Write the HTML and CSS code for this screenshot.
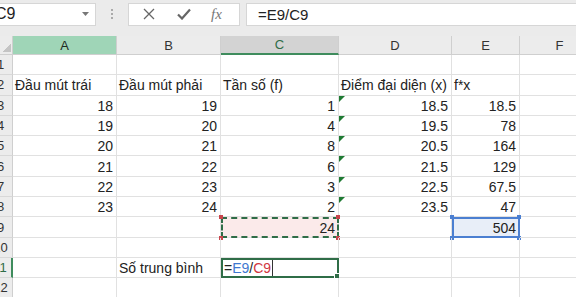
FILE: index.html
```html
<!DOCTYPE html>
<html lang="vi">
<head>
    <meta charset="UTF-8">
    <title>Bảng tính</title>
    <link rel="stylesheet" href="styles.css">
</head>
<body>
    <div class="toolbar">
        <div class="name-box">
            <span class="name">C9</span>
            <svg class="caret" width="7" height="4" viewBox="0 0 7 4"><path d="M0 0h7L3.5 4z" fill="#777"/></svg>
        </div>
        <div class="grip"><i></i><i></i><i></i></div>
        <div class="fbuttons">
            <svg width="12" height="12" viewBox="0 0 12 12"><path d="M1 1l10 10M11 1L1 11" stroke="#666" stroke-width="1.3" fill="none"/></svg>
            <svg width="14" height="12" viewBox="0 0 14 12"><path d="M1 6.5l4 4L13 1.5" stroke="#666" stroke-width="2.2" fill="none"/></svg>
            <span class="fx">fx</span>
        </div>
        <div class="formula">=E9/C9</div>
    </div>

    <div class="sheet">
        <div class="row head">
            <div class="corner"></div>
            <div class="col sel-col">A</div>
            <div class="col">B</div>
            <div class="col act-col">C</div>
            <div class="col">D</div>
            <div class="col">E</div>
            <div class="col">F</div>
        </div>
        <div class="row">
            <div class="rh">1</div><div class="c"></div><div class="c"></div><div class="c"></div><div class="c"></div><div class="c"></div><div class="c"></div>
        </div>
        <div class="row">
            <div class="rh">2</div><div class="c">Đầu mút trái</div><div class="c">Đầu mút phải</div><div class="c">Tần số (f)</div><div class="c">Điểm đại diện (x)</div><div class="c">f*x</div><div class="c"></div>
        </div>
        <div class="row">
            <div class="rh">3</div><div class="c n">18</div><div class="c n">19</div><div class="c n">1</div><div class="c n flag">18.5</div><div class="c n">18.5</div><div class="c"></div>
        </div>
        <div class="row">
            <div class="rh">4</div><div class="c n">19</div><div class="c n">20</div><div class="c n">4</div><div class="c n flag">19.5</div><div class="c n">78</div><div class="c"></div>
        </div>
        <div class="row">
            <div class="rh">5</div><div class="c n">20</div><div class="c n">21</div><div class="c n">8</div><div class="c n flag">20.5</div><div class="c n">164</div><div class="c"></div>
        </div>
        <div class="row">
            <div class="rh">6</div><div class="c n">21</div><div class="c n">22</div><div class="c n">6</div><div class="c n flag">21.5</div><div class="c n">129</div><div class="c"></div>
        </div>
        <div class="row">
            <div class="rh">7</div><div class="c n">22</div><div class="c n">23</div><div class="c n">3</div><div class="c n flag">22.5</div><div class="c n">67.5</div><div class="c"></div>
        </div>
        <div class="row">
            <div class="rh">8</div><div class="c n">23</div><div class="c n">24</div><div class="c n">2</div><div class="c n flag">23.5</div><div class="c n">47</div><div class="c"></div>
        </div>
        <div class="row">
            <div class="rh">9</div><div class="c"></div><div class="c"></div><div class="c n copy">24</div><div class="c"></div><div class="c n ref">504</div><div class="c"></div>
        </div>
        <div class="row">
            <div class="rh">10</div><div class="c"></div><div class="c"></div><div class="c"></div><div class="c"></div><div class="c"></div><div class="c"></div>
        </div>
        <div class="row">
            <div class="rh act-row">11</div><div class="c"></div><div class="c">Số trung bình</div><div class="c edit">=<span class="r1">E9</span>/<span class="r2">C9</span><span class="cursor"></span></div><div class="c"></div><div class="c"></div><div class="c"></div>
        </div>
        <div class="row">
            <div class="rh">12</div><div class="c"></div><div class="c"></div><div class="c"></div><div class="c"></div><div class="c"></div><div class="c"></div>
        </div>
    </div>
</body>
</html>
```

FILE: styles.css
```css
* {
    margin: 0;
    padding: 0;
    box-sizing: border-box;
}
body {
    background: #ebebeb;
    font-family: "Liberation Sans", Arial, sans-serif;
    color: #222;
    overflow: hidden;
}
.toolbar {
    display: flex;
    align-items: center;
    height: 36px;
    padding-bottom: 8px;
}
.name-box {
    width: 110px;
    height: 23px;
    margin-left: -14px;
    background: #fff;
    border: 1px solid #d6d6d6;
    display: flex;
    align-items: center;
    justify-content: space-between;
    padding: 0 6px 0 8px;
}
.name {
    font-size: 16px;
}
.grip {
    width: 32px;
    display: flex;
    flex-direction: column;
    align-items: center;
    gap: 2px;
}
.grip i {
    width: 2px;
    height: 2px;
    background: #aaa;
}
.fbuttons {
    width: 112px;
    height: 23px;
    background: #fff;
    border: 1px solid #d6d6d6;
    display: flex;
    align-items: center;
    padding-left: 14px;
    gap: 22px;
}
.fx {
    font-family: "Liberation Serif", serif;
    font-style: italic;
    font-size: 15px;
    color: #777;
    margin-left: -2px;
}
.formula {
    flex: 1;
    height: 23px;
    margin-left: 6px;
    margin-right: -10px;
    background: #fff;
    border: 1px solid #d6d6d6;
    font-size: 15px;
    padding: 2px 0 0 11px;
}
.sheet {
    margin-left: -11px;
    background: #fff;
}
.row {
    display: grid;
    grid-template-columns: 24px 104px 104px 118px 113px 68px 80px;
    height: 20.3px;
}
.row.head {
    height: 19px;
    background: #ececec;
}
.corner {
    border-right: 1px solid #cfcfcf;
    border-bottom: 1px solid #cfcfcf;
    background: linear-gradient(135deg, transparent 62%, #c4c4c4 62%) right 1px bottom 2px / 11px 11px no-repeat;
}
.col {
    border-right: 1px solid #cfcfcf;
    border-bottom: 1px solid #cfcfcf;
    display: flex;
    align-items: center;
    justify-content: center;
    font-size: 13px;
    color: #333;
}
.sel-col {
    background: #9fd5b7;
    color: #1f2a22;
}
.act-col {
    background: #d3d3d3;
    color: #2f6d47;
    border-bottom: 2px solid #3f8c5d;
}
.rh {
    background: #ececec;
    border-right: 1px solid #cfcfcf;
    border-bottom: 1px solid #d8d8d8;
    font-size: 13px;
    color: #333;
    display: flex;
    align-items: center;
    justify-content: center;
}
.act-row {
    color: #2f6d47;
    border-right: 2px solid #3f8c5d;
}
.c {
    position: relative;
    border-right: 1px solid #e1e1e1;
    border-bottom: 1px solid #e1e1e1;
    font-size: 14px;
    display: flex;
    align-items: center;
    padding: 1px 3px 0 2px;
    white-space: nowrap;
}
.n {
    justify-content: flex-end;
}
.flag::before {
    content: "";
    position: absolute;
    left: 0;
    top: 0;
    border-top: 6px solid #1f7a33;
    border-right: 6px solid transparent;
}
.copy {
    background: #fbeaea;
    outline: 2px dashed #2f6d47;
    outline-offset: -2px;
}
.copy::after,
.ref::after {
    content: "";
    position: absolute;
    inset: -2px -2px -3px -2px;
    background:
        linear-gradient(#c8454c, #c8454c) left top / 4px 4px no-repeat,
        linear-gradient(#c8454c, #c8454c) right top / 4px 4px no-repeat,
        linear-gradient(#c8454c, #c8454c) left bottom / 4px 4px no-repeat,
        linear-gradient(#c8454c, #c8454c) right bottom / 4px 4px no-repeat;
}
.ref {
    background: #e8eef8;
    outline: 2px solid #4b7fd1;
    outline-offset: -2px;
}
.ref::after {
    background:
        linear-gradient(#4b7fd1, #4b7fd1) left top / 4px 4px no-repeat,
        linear-gradient(#4b7fd1, #4b7fd1) right top / 4px 4px no-repeat,
        linear-gradient(#4b7fd1, #4b7fd1) left bottom / 4px 4px no-repeat,
        linear-gradient(#4b7fd1, #4b7fd1) right bottom / 4px 4px no-repeat;
}
.edit {
    outline: 2px solid #2f6d47;
    outline-offset: -2px;
    padding-left: 3px;
}
.edit::after {
    content: "";
    position: absolute;
    right: -2px;
    bottom: -2px;
    width: 4px;
    height: 4px;
    background: #2f6d47;
    border: 1px solid #fff;
}
.r1 {
    color: #3f78d0;
}
.r2 {
    color: #d0373f;
}
.cursor {
    align-self: stretch;
    width: 1px;
    background: #333;
    margin-left: 1px;
}
```
